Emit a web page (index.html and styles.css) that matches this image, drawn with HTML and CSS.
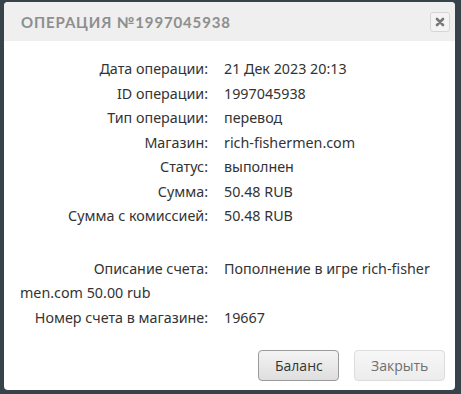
FILE: index.html
```html
<!DOCTYPE html>
<html lang="ru">
<head>
    <meta charset="UTF-8">
    <title>Операция</title>
    <link rel="stylesheet" href="styles.css">
</head>
<body>

    <div class="dialog">
        <div class="dialog-header">
            <h2 class="dialog-title">Операция №1997045938</h2>
            <button class="dialog-close" title="Закрыть">
                <svg width="10" height="10" viewBox="0 0 10 10">
                    <path d="M2 2 L8 8 M8 2 L2 8" stroke="#777" stroke-width="2.6" stroke-linecap="round"/>
                </svg>
            </button>
        </div>

        <div class="dialog-body">
            <div class="row"><span class="label">Дата операции:</span><span class="value">21 Дек 2023 20:13</span></div>
            <div class="row"><span class="label">ID операции:</span><span class="value">1997045938</span></div>
            <div class="row"><span class="label">Тип операции:</span><span class="value">перевод</span></div>
            <div class="row"><span class="label">Магазин:</span><span class="value">rich-fishermen.com</span></div>
            <div class="row"><span class="label">Статус:</span><span class="value">выполнен</span></div>
            <div class="row"><span class="label">Сумма:</span><span class="value">50.48 RUB</span></div>
            <div class="row"><span class="label">Сумма с комиссией:</span><span class="value">50.48 RUB</span></div>
            <div class="row row-gap"></div>
            <div class="row"><span class="label">Описание счета:</span><span class="value wrap">Пополнение в игре rich-fishermen.com 50.00 rub</span></div>
            <div class="row"><span class="label">Номер счета в магазине:</span><span class="value">19667</span></div>
        </div>

        <div class="dialog-footer">
            <button class="btn btn-primary">Баланс</button>
            <button class="btn btn-light">Закрыть</button>
        </div>
    </div>

</body>
</html>
```

FILE: styles.css
```css
html, body {
    margin: 0;
    height: 100%;
    background-color: #36434b;
}

body {
    padding: 2px 6px 4px 4px;
    box-sizing: border-box;
    font-family: "Noto Sans", sans-serif;
}

/* Dialog window */
.dialog {
    background-color: #fff;
    border-radius: 4px;
    height: 388px;
    display: flex;
    flex-direction: column;
    overflow: hidden;
}

.dialog-header {
    display: flex;
    align-items: center;
    justify-content: space-between;
    height: 39px;
    padding: 0 5px 0 17px;
    background-color: #efefef;
}

.dialog-title {
    margin: 0;
    font-family: "Lato", sans-serif;
    font-size: 15px;
    font-weight: 700;
    letter-spacing: 0.85px;
    text-transform: uppercase;
    color: #8e8e8e;
}

.dialog-close {
    width: 20px;
    height: 20px;
    padding: 0;
    display: flex;
    align-items: center;
    justify-content: center;
    background-color: #f3f3f3;
    border: 1px solid #d6d6d6;
    border-radius: 3px;
}

/* Body rows */
.dialog-body {
    flex: 1;
    padding: 16px 17px 0 16px;
    font-size: 14.3px;
    color: #333;
}

.row {
    line-height: 24.5px;
}

.row-gap {
    height: 28px;
}

.label {
    display: inline-block;
    width: 188px;
    margin-right: 16px;
    text-align: right;
}

.wrap {
    word-break: break-all;
}

/* Footer buttons */
.dialog-footer {
    display: flex;
    justify-content: flex-end;
    gap: 15px;
    padding: 0 10px 9px 0;
}

.btn {
    height: 31px;
    padding: 0 16px;
    font-family: "Open Sans", sans-serif;
    font-size: 14px;
    border-radius: 4px;
    cursor: pointer;
}

.btn-primary {
    width: 81px;
    color: #333;
    background: linear-gradient(#f4f4f4, #dedede);
    border: 1px solid #9a9a9a;
}

.btn-light {
    width: 91px;
    color: #6f6f6f;
    background: linear-gradient(#f7f7f7, #ececec);
    border: 1px solid #dcdcdc;
}
```
